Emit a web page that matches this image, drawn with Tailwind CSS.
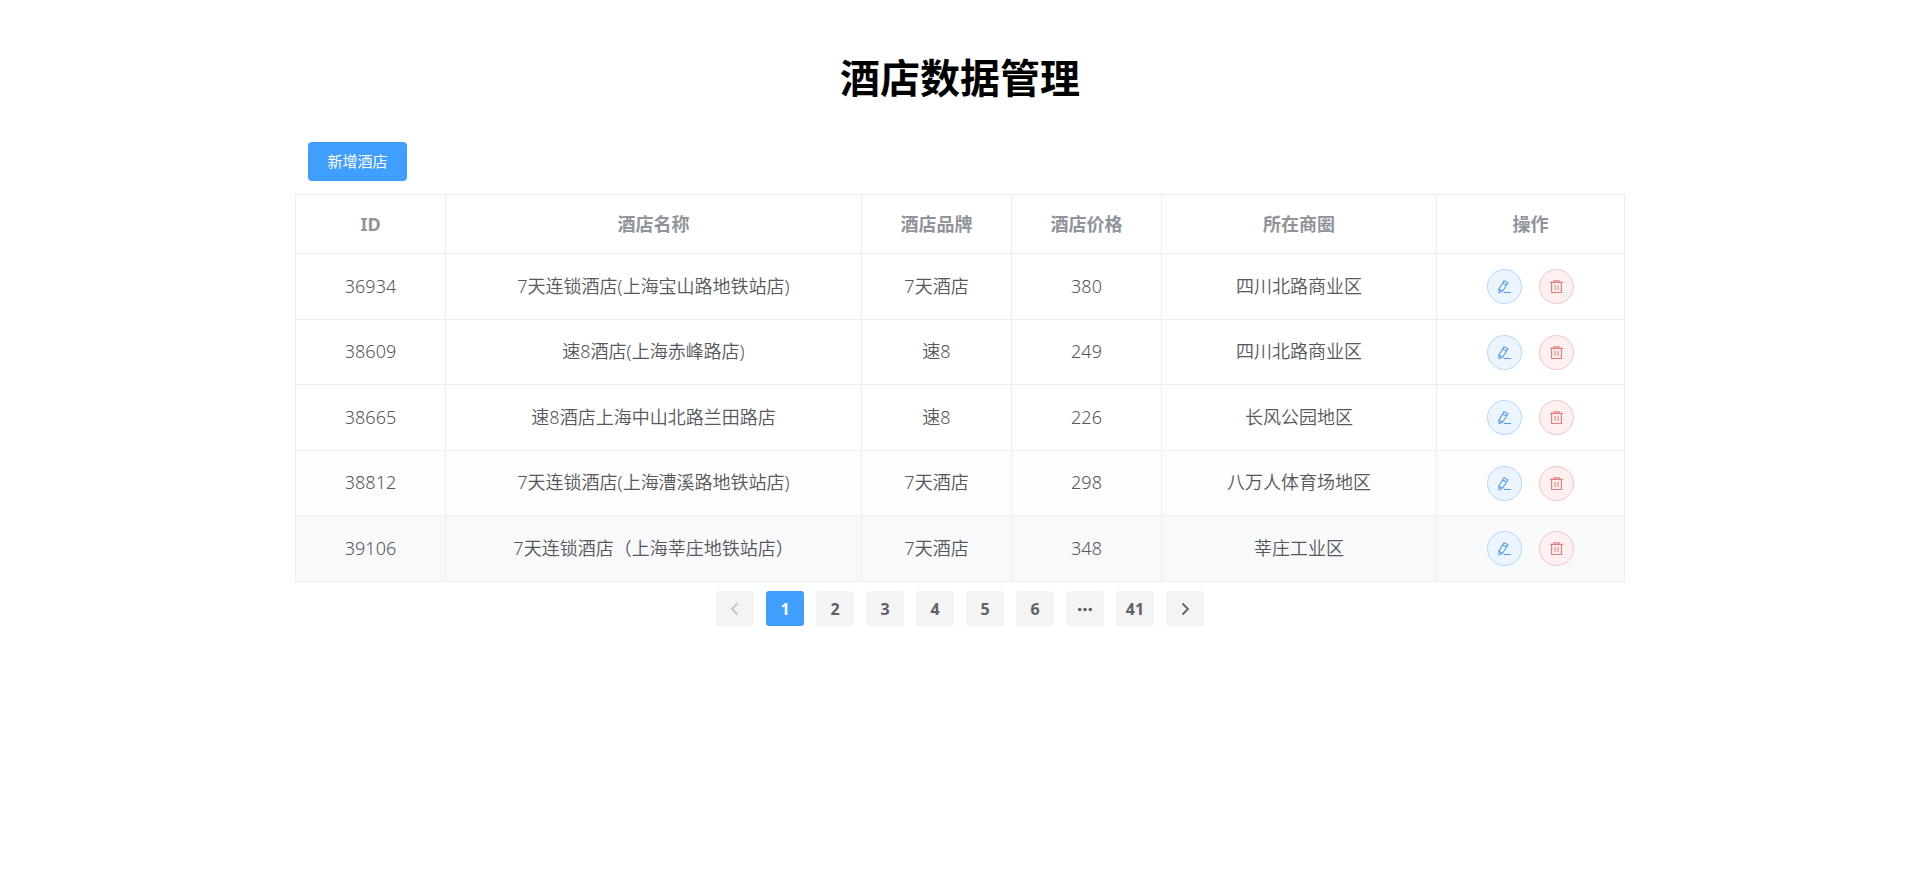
<!DOCTYPE html>
<html lang="zh-CN">
<head>
<meta charset="utf-8">
<title>酒店数据管理</title>
<script src="https://cdn.jsdelivr.net/npm/@tailwindcss/browser@4"></script>
</head>
<body class="bg-white font-['Noto_Sans','Noto_Sans_CJK_SC',sans-serif] text-[#606266]">
<svg class="hidden" aria-hidden="true">
  <symbol id="edit" viewBox="0 0 16 16" fill="none" stroke="currentColor" stroke-width="1.1">
    <path d="M7.6 1.9 11.6 4.1 6 13 2.2 14.6 1.9 10.9ZM6.1 4.2 10.2 6.5M2 10.9 6 13.1M7.2 14.3H14.8"/>
  </symbol>
  <symbol id="trash" viewBox="0 0 16 16" fill="none" stroke="currentColor">
    <path stroke-width="1.2" d="M1.2 3.6H14.8M5.3 3.4V1.8H10.7V3.4M2.8 3.8V14.4H13.2V3.8"/>
    <path d="M6.4 6.2V11.8M9.6 6.2V11.8"/>
  </symbol>
</svg>
<main class="mx-auto w-full max-w-[1330px] pt-12">
  <h1 class="text-center text-[40px] leading-[60px] font-bold text-black">酒店数据管理</h1>
  <div class="px-[13px] pt-[34px] pb-[13px]">
    <button type="button" class="block h-[39px] min-w-[99px] rounded bg-[#409eff] px-[19px] text-[15px] leading-none text-white">新增酒店</button>
  </div>
  <table class="w-full table-fixed border-collapse border border-[#ebeef5] text-center text-[18px] leading-6">
    <colgroup><col class="w-[150px]"><col><col class="w-[150px]"><col class="w-[150px]"><col class="w-[275px]"><col class="w-[188px]"></colgroup>
    <thead class="text-[#909399]">
      <tr class="h-[59px] *:border *:border-[#ebeef5] *:font-bold"><th>ID</th><th>酒店名称</th><th>酒店品牌</th><th>酒店价格</th><th>所在商圈</th><th>操作</th></tr>
    </thead>
    <tbody id="rows"></tbody>
  </table>
  <nav aria-label="分页" class="flex justify-center gap-3 pt-[9px] text-[16px] font-bold *:flex *:h-[35px] *:w-[38px] *:items-center *:justify-center *:rounded-[3px]">
    <button type="button" disabled aria-label="上一页" class="bg-[#f4f4f5] text-[#c0c4cc]"><svg class="size-4" viewBox="0 0 16 16" fill="none" stroke="currentColor" stroke-width="1.8"><path d="M10.5 2.5 5 8 10.5 13.5"/></svg></button>
    <button type="button" aria-current="page" class="bg-[#409eff] text-white">1</button>
    <button type="button" class="bg-[#f4f4f5]">2</button>
    <button type="button" class="bg-[#f4f4f5]">3</button>
    <button type="button" class="bg-[#f4f4f5]">4</button>
    <button type="button" class="bg-[#f4f4f5]">5</button>
    <button type="button" class="bg-[#f4f4f5]">6</button>
    <button type="button" aria-label="更多页" class="bg-[#f4f4f5]"><svg class="size-4" viewBox="0 0 16 16" fill="currentColor"><circle cx="2.7" cy="8.5" r="1.8"/><circle cx="8" cy="8.5" r="1.8"/><circle cx="13.3" cy="8.5" r="1.8"/></svg></button>
    <button type="button" class="bg-[#f4f4f5]">41</button>
    <button type="button" aria-label="下一页" class="bg-[#f4f4f5]"><svg class="size-4" viewBox="0 0 16 16" fill="none" stroke="currentColor" stroke-width="1.8"><path d="M5.5 2.5 11 8 5.5 13.5"/></svg></button>
  </nav>
</main>
<script>
const hotels = [
  [36934, '7天连锁酒店(上海宝山路地铁站店)', '7天酒店', 380, '四川北路商业区'],
  [38609, '速8酒店(上海赤峰路店)', '速8', 249, '四川北路商业区'],
  [38665, '速8酒店上海中山北路兰田路店', '速8', 226, '长风公园地区'],
  [38812, '7天连锁酒店(上海漕溪路地铁站店)', '7天酒店', 298, '八万人体育场地区'],
  [39106, '7天连锁酒店（上海莘庄地铁站店）', '7天酒店', 348, '莘庄工业区'],
];
const tints = ['', '', '', 'bg-[#fdfdfd]', 'bg-[#f8f9fb]'];
document.getElementById('rows').innerHTML = hotels.map((hotel, i) => `
  <tr class="odd:h-[66px] even:h-[65px] font-[350] text-[#55575b] *:border *:border-[#ebeef5] ${tints[i]}">
    ${hotel.map(value => `<td class="pb-0.5">${value}</td>`).join('')}
    <td><div class="flex justify-center gap-[17px]">
      <button type="button" aria-label="编辑" class="flex size-[35px] items-center justify-center rounded-full border border-[#b3d8ff] bg-[#ecf5ff] text-[#4f9aec]"><svg class="size-[15px]"><use href="#edit"/></svg></button>
      <button type="button" aria-label="删除" class="flex size-[35px] items-center justify-center rounded-full border border-[#f6c4c6] bg-[#fef0f0] text-[#e07b7b]"><svg class="size-[15px]"><use href="#trash"/></svg></button>
    </div></td>
  </tr>`).join('');
</script>
</body>
</html>
